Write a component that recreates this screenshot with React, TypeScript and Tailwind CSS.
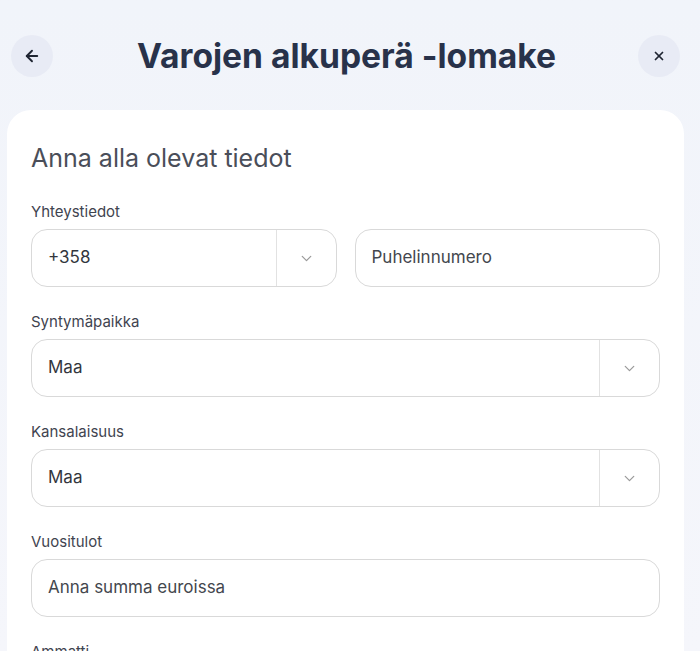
import React from 'react';
import { ArrowLeft, X, ChevronDown } from 'lucide-react';

const font = { fontFamily: 'Inter, "Noto Sans", sans-serif' };

const Label: React.FC<{ children: React.ReactNode }> = ({ children }) => (
  <div className="text-[15px] leading-5 text-[#3f4450] mb-[7px]">{children}</div>
);

const SelectBox: React.FC<{ value: string; className?: string }> = ({ value, className = '' }) => (
  <div className={`h-[58px] flex items-center rounded-2xl border border-[#d9d9d9] bg-white ${className}`}>
    <span className="flex-1 pl-4 text-[17px] text-[#33363d]">{value}</span>
    <div className="w-[60px] h-full flex items-center justify-center border-l border-[#e2e2e2]">
      <ChevronDown size={17} strokeWidth={1.75} className="text-[#9a9a9a]" />
    </div>
  </div>
);

const InputBox: React.FC<{ placeholder: string; className?: string }> = ({ placeholder, className = '' }) => (
  <div className={`h-[58px] flex items-center rounded-2xl border border-[#d9d9d9] bg-white px-4 ${className}`}>
    <span className="text-[17px] text-[#44474e]">{placeholder}</span>
  </div>
);

export default function App() {
  return (
    <div style={font} className="h-[651px] overflow-hidden bg-gradient-to-b from-[#f1f4fa] to-[#f5f6fb]">
      <div className="pt-[35px] pl-[11px] pr-[20px] h-[77px] flex items-center justify-between">
        <button className="w-[42px] h-[42px] rounded-full bg-[#e8ebf5] flex items-center justify-center text-[#1f2532]">
          <ArrowLeft size={18} strokeWidth={2.5} />
        </button>
        <h1 className="text-[33.6px] leading-[42px] font-bold text-[#28324a] ml-[2px]">Varojen alkuperä -lomake</h1>
        <button className="w-[42px] h-[42px] rounded-full bg-[#e8ebf5] flex items-center justify-center text-[#1f2532]">
          <X size={14} strokeWidth={3} />
        </button>
      </div>

      <div className="mt-[33px] ml-[7px] w-[677px] bg-white rounded-t-3xl px-6 pt-8 pb-10">
        <h2 className="text-[25px] leading-8 text-[#4a4e59] mb-7">Anna alla olevat tiedot</h2>

        <Label>Yhteystiedot</Label>
        <div className="grid grid-cols-2 gap-[18px] mb-[25px]">
          <SelectBox value="+358" />
          <InputBox placeholder="Puhelinnumero" />
        </div>

        <Label>Syntymäpaikka</Label>
        <SelectBox value="Maa" className="mb-[25px]" />

        <Label>Kansalaisuus</Label>
        <SelectBox value="Maa" className="mb-[25px]" />

        <Label>Vuositulot</Label>
        <InputBox placeholder="Anna summa euroissa" className="mb-[25px]" />

        <Label>Ammatti</Label>
        <SelectBox value="Valitse" />
      </div>
    </div>
  );
}
